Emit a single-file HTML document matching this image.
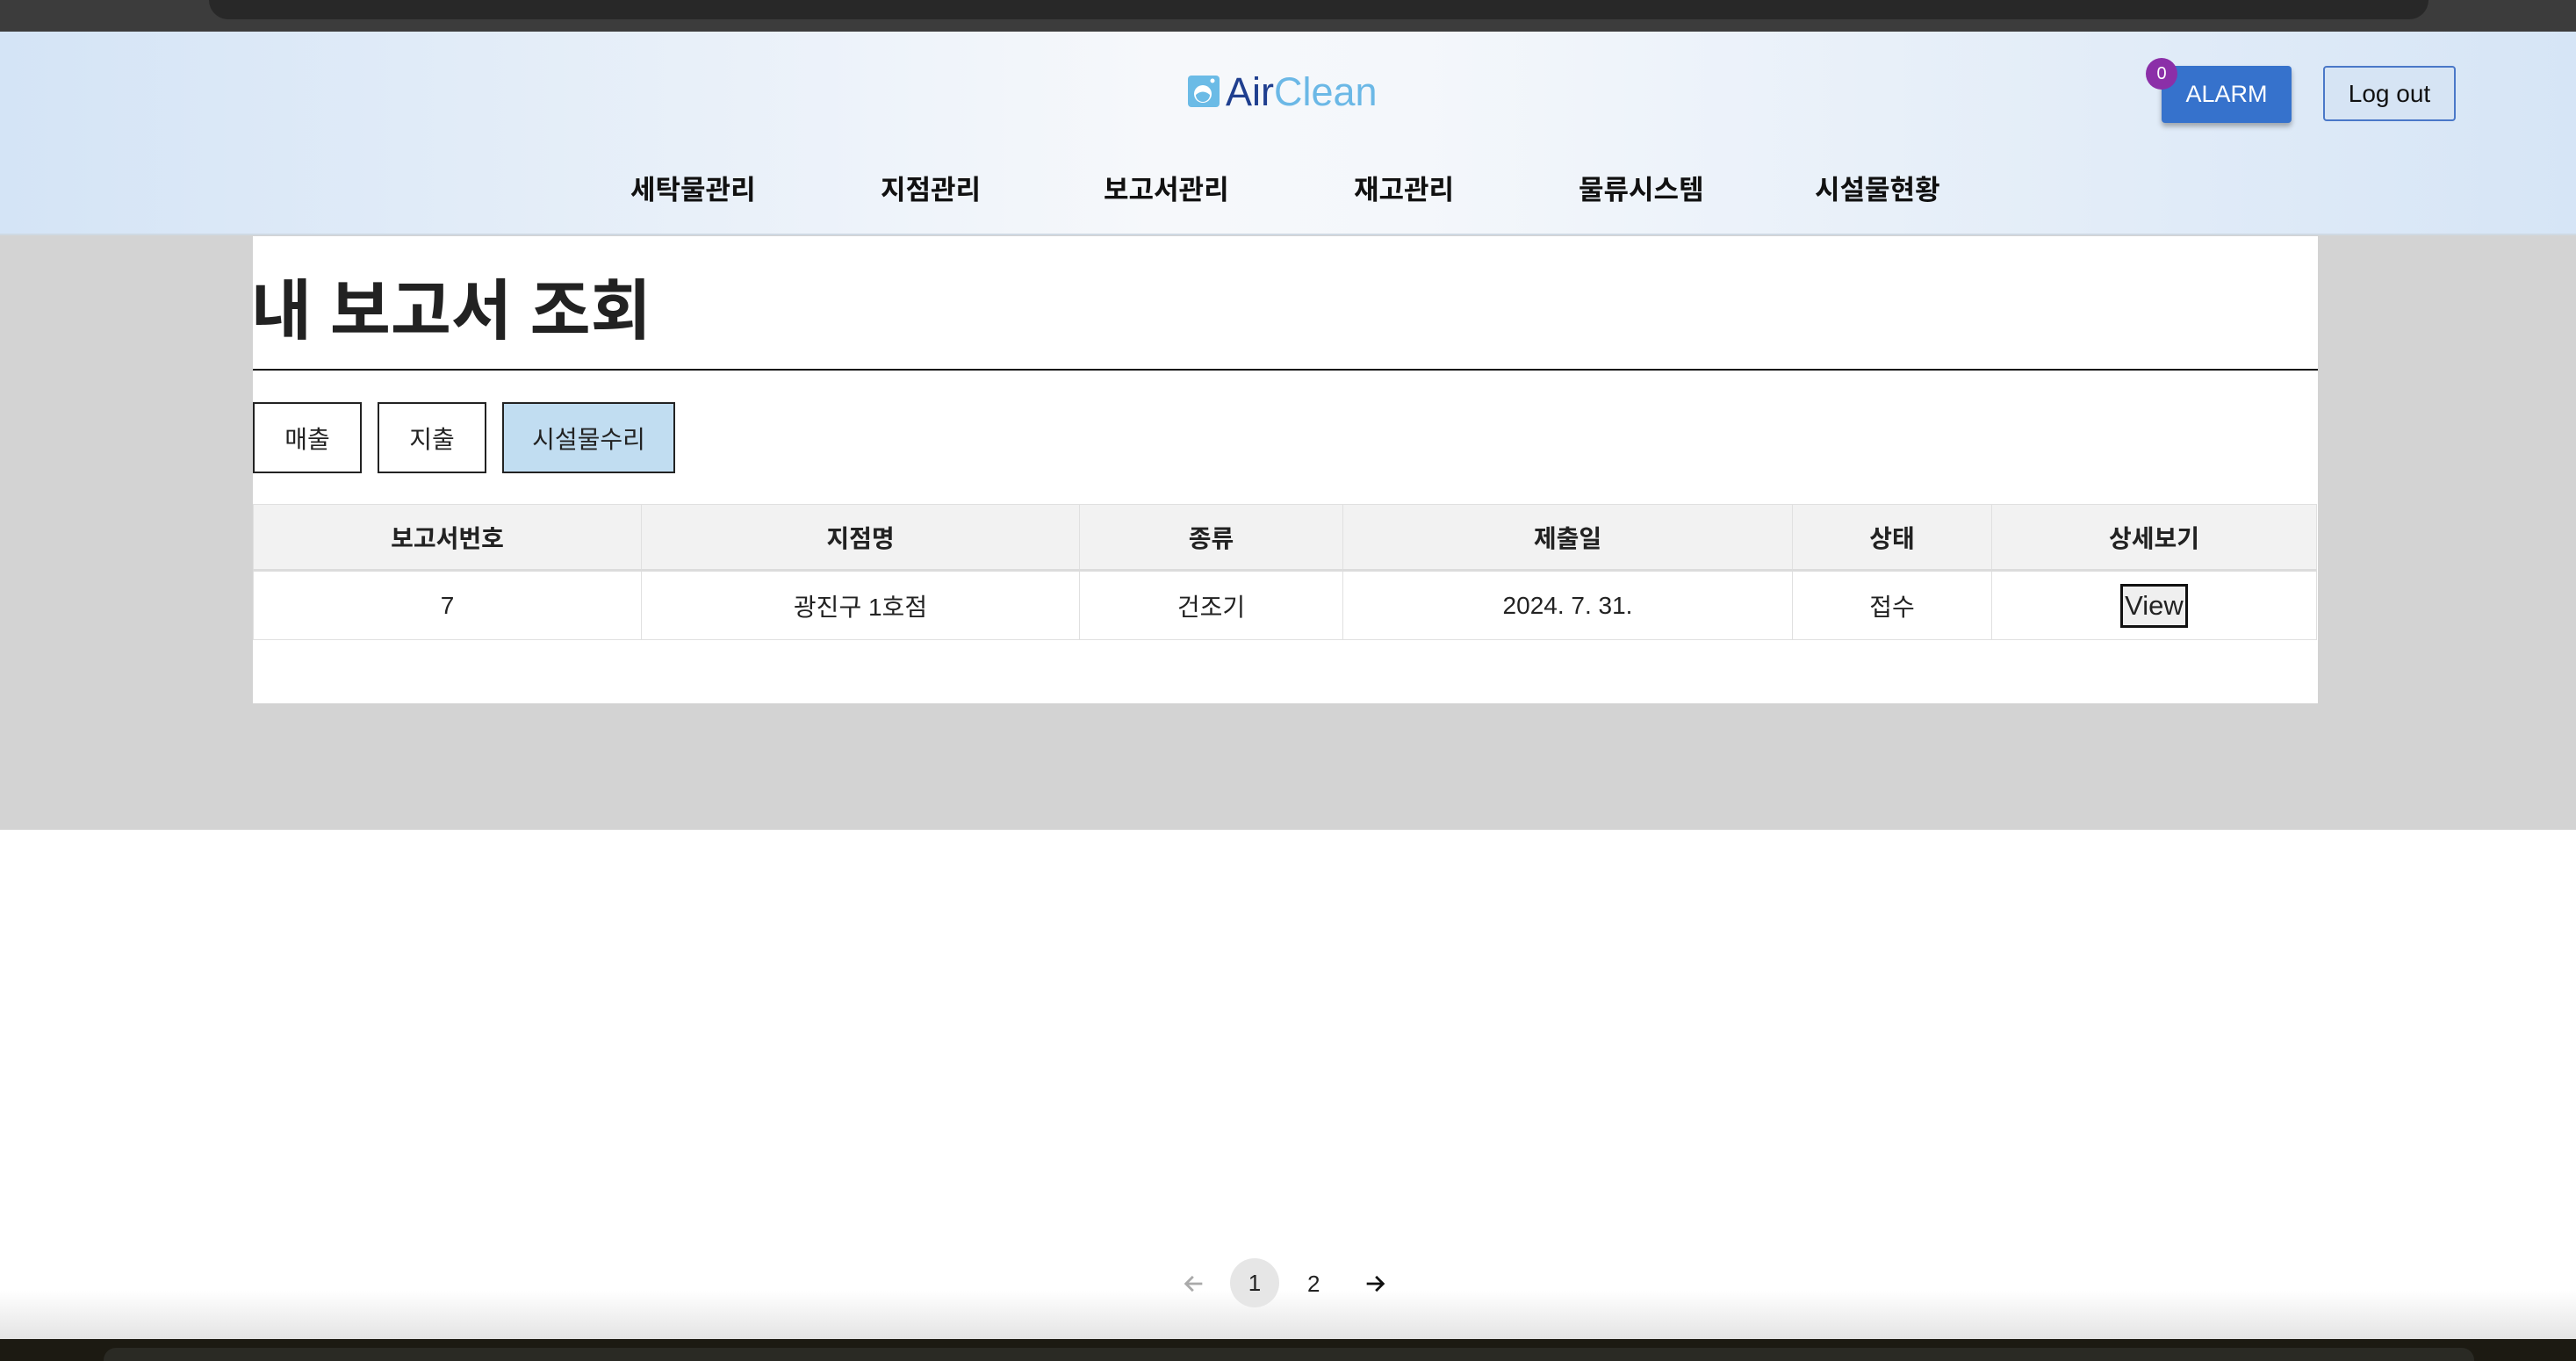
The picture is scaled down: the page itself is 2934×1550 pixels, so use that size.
<!DOCTYPE html>
<html><head><meta charset="utf-8"><style>
*{margin:0;padding:0;box-sizing:border-box}
body{width:2934px;height:1550px;position:relative;overflow:hidden;background:#fff;font-family:"Liberation Sans","Noto Sans CJK KR",sans-serif;color:#222}
.abs{position:absolute}
#top{left:0;top:0;width:2934px;height:36px;background:#3c3c3c}
#top .u{left:238px;top:0;width:2528px;height:22px;background:#282828;border-radius:0 0 30px 30px}
#hdr{left:0;top:36px;width:2934px;height:232px;background:linear-gradient(90deg,#d4e4f6 0%,#f6f8fb 45%,#f4f7fb 55%,#d6e5f6 100%);border-bottom:2px solid #cfd9e3}
#gray{left:0;top:268px;width:2934px;height:677px;background:#d3d3d3}
#box{left:288px;top:269px;width:2352px;height:532px;background:#fff}
.nav{top:192px;font-size:31px;font-weight:700;color:#111;line-height:50px}
.btn{background:#fff;border:2px solid #222;font-size:28px;display:flex;align-items:center;justify-content:center;top:458px;height:81px}
table{position:absolute;left:288px;top:574px;width:2351px;border-collapse:collapse;font-size:28px}
td,th{border:1px solid #e0e0e0;text-align:center}
th{background:#f2f2f2;height:75px;font-weight:700;border-bottom:3px solid #dcdcdc}
td{height:79px}
</style></head><body>
<div id="top" class="abs"><div class="u abs"></div></div>
<div id="hdr" class="abs"></div>
<svg class="abs" style="left:1353px;top:86px" width="36" height="36" viewBox="0 0 36 36"><rect x="0" y="0" width="36" height="36" rx="4" fill="#6bbbe6"/><circle cx="17" cy="21" r="10" fill="#fff"/><path d="M9 22 Q17 15 25 22 A8 8 0 0 1 9 22Z" fill="#6bbbe6"/><circle cx="28" cy="6" r="2.5" fill="#fff"/></svg>
<div class="abs" style="left:1396px;top:77px;font-size:45px;line-height:56px"><span style="color:#1f3f8f">Air</span><span style="color:#6bb8e6">Clean</span></div>
<div class="abs" style="left:2462px;top:75px;width:148px;height:65px;background:#3672cc;border-radius:4px;box-shadow:0 4px 6px rgba(0,0,0,.3);color:#fff;font-size:27px;display:flex;align-items:center;justify-content:center">ALARM</div>
<div class="abs" style="left:2444px;top:66px;width:36px;height:36px;border-radius:50%;background:#8b2fa8;color:#fff;font-size:20px;display:flex;align-items:center;justify-content:center">0</div>
<div class="abs" style="left:2646px;top:75px;width:151px;height:63px;background:#d6e4f4;border:2px solid #4a78c8;border-radius:4px;color:#111;font-size:28px;display:flex;align-items:center;justify-content:center">Log out</div>
<div class="abs nav" style="left:718px">세탁물관리</div>
<div class="abs nav" style="left:1003px">지점관리</div>
<div class="abs nav" style="left:1257px">보고서관리</div>
<div class="abs nav" style="left:1542px">재고관리</div>
<div class="abs nav" style="left:1798px">물류시스템</div>
<div class="abs nav" style="left:2067px">시설물현황</div>
<div id="gray" class="abs"></div>
<div id="box" class="abs"></div>
<div class="abs" style="left:286px;top:302px;font-size:75px;font-weight:700;line-height:104px;color:#222">내 보고서 조회</div>
<div class="abs" style="left:288px;top:420px;width:2352px;height:2px;background:#111"></div>
<div class="abs btn" style="left:288px;width:124px">매출</div>
<div class="abs btn" style="left:430px;width:124px">지출</div>
<div class="abs btn" style="left:572px;width:197px;background:#c1ddf1">시설물수리</div>
<table>
<tr><th style="width:442px">보고서번호</th><th style="width:499px">지점명</th><th style="width:300px">종류</th><th style="width:512px">제출일</th><th style="width:227px">상태</th><th>상세보기</th></tr>
<tr><td>7</td><td>광진구 1호점</td><td>건조기</td><td>2024. 7. 31.</td><td>접수</td><td><span style="display:inline-block;border:3px solid #111;background:#efefef;font-size:31px;padding:4px 2px;line-height:36px">View</span></td></tr>
</table>
<div class="abs" style="left:0;top:1470px;width:2934px;height:55px;background:linear-gradient(#fff,#e4e4e4)"></div>
<svg class="abs" style="left:1346px;top:1448px" width="28" height="28" viewBox="0 0 24 24"><path d="M20 12H5M11 5l-7 7 7 7" fill="none" stroke="#aaa" stroke-width="2.4"/></svg>
<div class="abs" style="left:1401px;top:1433px;width:56px;height:56px;border-radius:50%;background:#e6e6e6;font-size:26px;display:flex;align-items:center;justify-content:center">1</div>
<div class="abs" style="left:1489px;top:1447px;font-size:26px">2</div>
<svg class="abs" style="left:1552px;top:1448px" width="28" height="28" viewBox="0 0 24 24"><path d="M4 12h15M13 5l7 7-7 7" fill="none" stroke="#111" stroke-width="2.4"/></svg>
<div class="abs" style="left:0;top:1525px;width:2934px;height:25px;background:#1c1a12"></div>
<div class="abs" style="left:118px;top:1535px;width:2700px;height:15px;background:#2a2a24;border-radius:14px 14px 0 0"></div>
</body></html>
